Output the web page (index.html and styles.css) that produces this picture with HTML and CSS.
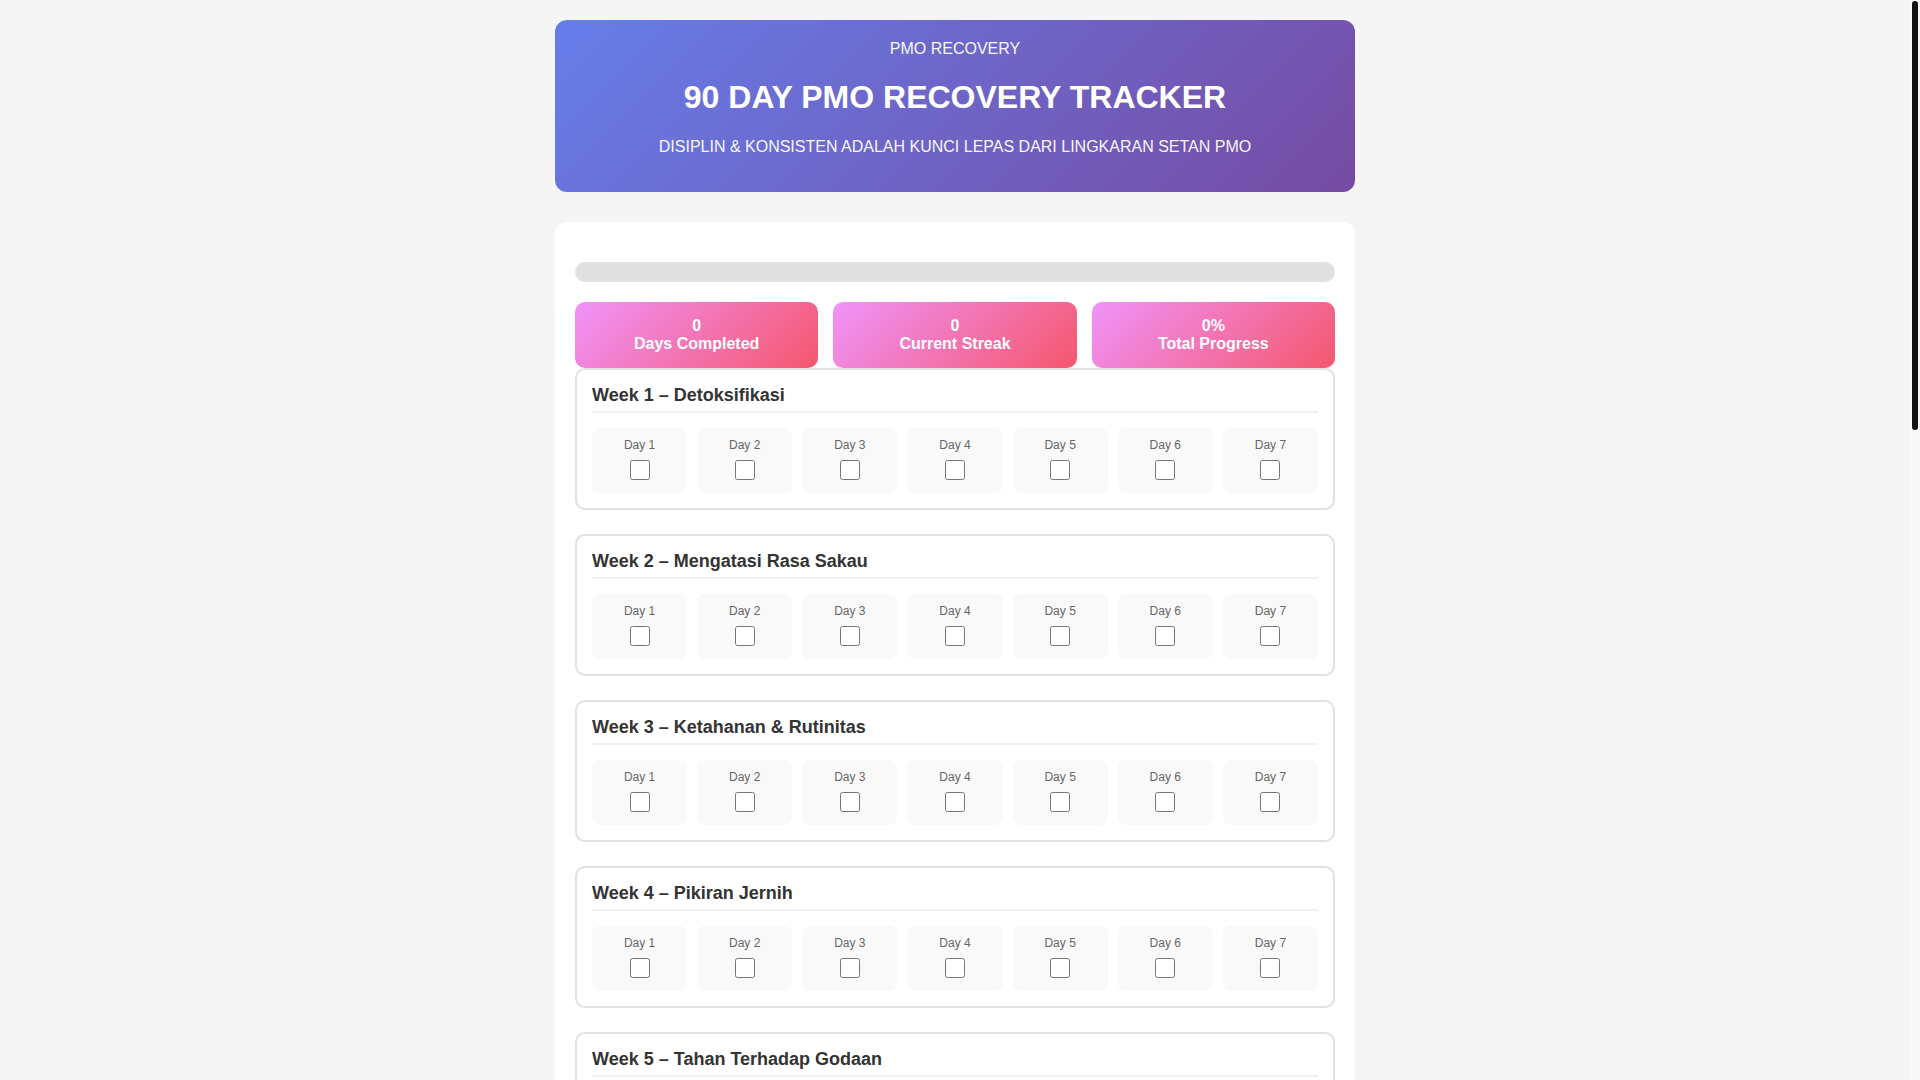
FILE: index.html
```html
<!DOCTYPE html>
<html lang="id">
<head>
<meta charset="utf-8">
<title>90 Day PMO Recovery Tracker</title>
<link rel="stylesheet" href="styles.css">
</head>
<body>
<div class="scrollbar" aria-hidden="true"><div class="scrollbar-thumb"></div></div>
<div class="container">
  <header class="hero">
    <p class="eyebrow">PMO RECOVERY</p>
    <h1 class="hero-title">90 DAY PMO RECOVERY TRACKER</h1>
    <p class="hero-sub">DISIPLIN &amp; KONSISTEN ADALAH KUNCI LEPAS DARI LINGKARAN SETAN PMO</p>
  </header>

  <main class="panel">
    <div class="progress"><div class="progress-fill"></div></div>

    <div class="stats">
      <div class="stat"><div>0</div><div>Days Completed</div></div>
      <div class="stat"><div>0</div><div>Current Streak</div></div>
      <div class="stat"><div>0%</div><div>Total Progress</div></div>
    </div>

    <section class="week">
      <h3 class="week-title">Week 1 – Detoksifikasi</h3>
      <div class="days">
        <label class="day"><span>Day 1</span><input type="checkbox"></label>
        <label class="day"><span>Day 2</span><input type="checkbox"></label>
        <label class="day"><span>Day 3</span><input type="checkbox"></label>
        <label class="day"><span>Day 4</span><input type="checkbox"></label>
        <label class="day"><span>Day 5</span><input type="checkbox"></label>
        <label class="day"><span>Day 6</span><input type="checkbox"></label>
        <label class="day"><span>Day 7</span><input type="checkbox"></label>
      </div>
    </section>

    <section class="week">
      <h3 class="week-title">Week 2 – Mengatasi Rasa Sakau</h3>
      <div class="days">
        <label class="day"><span>Day 1</span><input type="checkbox"></label>
        <label class="day"><span>Day 2</span><input type="checkbox"></label>
        <label class="day"><span>Day 3</span><input type="checkbox"></label>
        <label class="day"><span>Day 4</span><input type="checkbox"></label>
        <label class="day"><span>Day 5</span><input type="checkbox"></label>
        <label class="day"><span>Day 6</span><input type="checkbox"></label>
        <label class="day"><span>Day 7</span><input type="checkbox"></label>
      </div>
    </section>

    <section class="week">
      <h3 class="week-title">Week 3 – Ketahanan &amp; Rutinitas</h3>
      <div class="days">
        <label class="day"><span>Day 1</span><input type="checkbox"></label>
        <label class="day"><span>Day 2</span><input type="checkbox"></label>
        <label class="day"><span>Day 3</span><input type="checkbox"></label>
        <label class="day"><span>Day 4</span><input type="checkbox"></label>
        <label class="day"><span>Day 5</span><input type="checkbox"></label>
        <label class="day"><span>Day 6</span><input type="checkbox"></label>
        <label class="day"><span>Day 7</span><input type="checkbox"></label>
      </div>
    </section>

    <section class="week">
      <h3 class="week-title">Week 4 – Pikiran Jernih</h3>
      <div class="days">
        <label class="day"><span>Day 1</span><input type="checkbox"></label>
        <label class="day"><span>Day 2</span><input type="checkbox"></label>
        <label class="day"><span>Day 3</span><input type="checkbox"></label>
        <label class="day"><span>Day 4</span><input type="checkbox"></label>
        <label class="day"><span>Day 5</span><input type="checkbox"></label>
        <label class="day"><span>Day 6</span><input type="checkbox"></label>
        <label class="day"><span>Day 7</span><input type="checkbox"></label>
      </div>
    </section>

    <section class="week">
      <h3 class="week-title">Week 5 – Tahan Terhadap Godaan</h3>
      <div class="days">
        <label class="day"><span>Day 1</span><input type="checkbox"></label>
        <label class="day"><span>Day 2</span><input type="checkbox"></label>
        <label class="day"><span>Day 3</span><input type="checkbox"></label>
        <label class="day"><span>Day 4</span><input type="checkbox"></label>
        <label class="day"><span>Day 5</span><input type="checkbox"></label>
        <label class="day"><span>Day 6</span><input type="checkbox"></label>
        <label class="day"><span>Day 7</span><input type="checkbox"></label>
      </div>
    </section>

    <section class="week">
      <h3 class="week-title">Week 6 – Membangun Kebiasaan Baru</h3>
      <div class="days">
        <label class="day"><span>Day 1</span><input type="checkbox"></label>
        <label class="day"><span>Day 2</span><input type="checkbox"></label>
        <label class="day"><span>Day 3</span><input type="checkbox"></label>
        <label class="day"><span>Day 4</span><input type="checkbox"></label>
        <label class="day"><span>Day 5</span><input type="checkbox"></label>
        <label class="day"><span>Day 6</span><input type="checkbox"></label>
        <label class="day"><span>Day 7</span><input type="checkbox"></label>
      </div>
    </section>

    <section class="week">
      <h3 class="week-title">Week 7 – Energi Kembali</h3>
      <div class="days">
        <label class="day"><span>Day 1</span><input type="checkbox"></label>
        <label class="day"><span>Day 2</span><input type="checkbox"></label>
        <label class="day"><span>Day 3</span><input type="checkbox"></label>
        <label class="day"><span>Day 4</span><input type="checkbox"></label>
        <label class="day"><span>Day 5</span><input type="checkbox"></label>
        <label class="day"><span>Day 6</span><input type="checkbox"></label>
        <label class="day"><span>Day 7</span><input type="checkbox"></label>
      </div>
    </section>

    <section class="week">
      <h3 class="week-title">Week 8 – Fokus &amp; Produktif</h3>
      <div class="days">
        <label class="day"><span>Day 1</span><input type="checkbox"></label>
        <label class="day"><span>Day 2</span><input type="checkbox"></label>
        <label class="day"><span>Day 3</span><input type="checkbox"></label>
        <label class="day"><span>Day 4</span><input type="checkbox"></label>
        <label class="day"><span>Day 5</span><input type="checkbox"></label>
        <label class="day"><span>Day 6</span><input type="checkbox"></label>
        <label class="day"><span>Day 7</span><input type="checkbox"></label>
      </div>
    </section>

    <section class="week">
      <h3 class="week-title">Week 9 – Percaya Diri</h3>
      <div class="days">
        <label class="day"><span>Day 1</span><input type="checkbox"></label>
        <label class="day"><span>Day 2</span><input type="checkbox"></label>
        <label class="day"><span>Day 3</span><input type="checkbox"></label>
        <label class="day"><span>Day 4</span><input type="checkbox"></label>
        <label class="day"><span>Day 5</span><input type="checkbox"></label>
        <label class="day"><span>Day 6</span><input type="checkbox"></label>
        <label class="day"><span>Day 7</span><input type="checkbox"></label>
      </div>
    </section>

    <section class="week">
      <h3 class="week-title">Week 10 – Kontrol Diri</h3>
      <div class="days">
        <label class="day"><span>Day 1</span><input type="checkbox"></label>
        <label class="day"><span>Day 2</span><input type="checkbox"></label>
        <label class="day"><span>Day 3</span><input type="checkbox"></label>
        <label class="day"><span>Day 4</span><input type="checkbox"></label>
        <label class="day"><span>Day 5</span><input type="checkbox"></label>
        <label class="day"><span>Day 6</span><input type="checkbox"></label>
        <label class="day"><span>Day 7</span><input type="checkbox"></label>
      </div>
    </section>

    <section class="week">
      <h3 class="week-title">Week 11 – Hidup Seimbang</h3>
      <div class="days">
        <label class="day"><span>Day 1</span><input type="checkbox"></label>
        <label class="day"><span>Day 2</span><input type="checkbox"></label>
        <label class="day"><span>Day 3</span><input type="checkbox"></label>
        <label class="day"><span>Day 4</span><input type="checkbox"></label>
        <label class="day"><span>Day 5</span><input type="checkbox"></label>
        <label class="day"><span>Day 6</span><input type="checkbox"></label>
        <label class="day"><span>Day 7</span><input type="checkbox"></label>
      </div>
    </section>

    <section class="week">
      <h3 class="week-title">Week 12 – Versi Terbaik Diri</h3>
      <div class="days">
        <label class="day"><span>Day 1</span><input type="checkbox"></label>
        <label class="day"><span>Day 2</span><input type="checkbox"></label>
        <label class="day"><span>Day 3</span><input type="checkbox"></label>
        <label class="day"><span>Day 4</span><input type="checkbox"></label>
        <label class="day"><span>Day 5</span><input type="checkbox"></label>
        <label class="day"><span>Day 6</span><input type="checkbox"></label>
        <label class="day"><span>Day 7</span><input type="checkbox"></label>
      </div>
    </section>

    <section class="week">
      <h3 class="week-title">Week 13 – Kemenangan</h3>
      <div class="days">
        <label class="day"><span>Day 1</span><input type="checkbox"></label>
        <label class="day"><span>Day 2</span><input type="checkbox"></label>
        <label class="day"><span>Day 3</span><input type="checkbox"></label>
        <label class="day"><span>Day 4</span><input type="checkbox"></label>
        <label class="day"><span>Day 5</span><input type="checkbox"></label>
        <label class="day"><span>Day 6</span><input type="checkbox"></label>
      </div>
    </section>
  </main>
</div>
</body>
</html>
```

FILE: styles.css
```css
* {
  box-sizing: border-box;
}

body {
  margin: 0;
  padding: 20px 30px 20px 20px;
  background: #f5f5f5;
  font-family: "Liberation Sans", Arial, Helvetica, sans-serif;
  color: #333;
}

/* drawn stand-in for the page scrollbar seen in the reference */
.scrollbar {
  position: fixed;
  top: 0;
  right: 0;
  width: 10px;
  height: 100vh;
  background: #f8f8f8;
  z-index: 10;
}

.scrollbar-thumb {
  margin: 1px 2px 0 2px;
  height: 429px;
  border-radius: 4px;
  background: #111;
}

.container {
  max-width: 800px;
  margin: 0 auto;
}

.hero {
  background: linear-gradient(135deg, #667eea 0%, #764ba2 100%);
  color: #fff;
  border-radius: 12px;
  padding: 20px;
  text-align: center;
  margin-bottom: 30px;
}

.eyebrow {
  margin: 0;
  font-size: 16px;
  opacity: 0.95;
}

.hero-title {
  margin: 21px 0 22px;
  font-size: 32px;
  font-weight: bold;
}

.hero-sub {
  margin: 0 0 16px;
  font-size: 16px;
  opacity: 0.95;
}

.panel {
  background: #fff;
  border-radius: 12px;
  padding: 20px;
}

.progress {
  margin: 20px 0;
  height: 20px;
  border-radius: 10px;
  background: #e0e0e0;
  overflow: hidden;
}

.progress-fill {
  width: 0;
  height: 100%;
  background: linear-gradient(90deg, #667eea, #764ba2);
}

.stats {
  display: grid;
  grid-template-columns: repeat(3, 1fr);
  gap: 15px;
}

.stat {
  background: linear-gradient(135deg, #f093fb 0%, #f5576c 100%);
  color: #fff;
  border-radius: 10px;
  padding: 15px;
  text-align: center;
  font-weight: bold;
  font-size: 16px;
}

.week {
  border: 2px solid #e0e0e0;
  border-radius: 10px;
  padding: 15px;
  margin-bottom: 24px;
}

.week-title {
  margin: 0 0 15px;
  padding: 0 0 5px;
  border-bottom: 2px solid #f0f0f0;
  font-size: 18px;
  font-weight: bold;
  color: #333;
}

.days {
  display: grid;
  grid-template-columns: repeat(7, 1fr);
  gap: 10px;
}

.day {
  display: flex;
  flex-direction: column;
  align-items: center;
  background: #f9f9f9;
  border-radius: 8px;
  padding: 10px;
  font-size: 12px;
  color: #666;
}

.day input {
  width: 20px;
  height: 20px;
  margin: 8px 0 3px;
}
```
